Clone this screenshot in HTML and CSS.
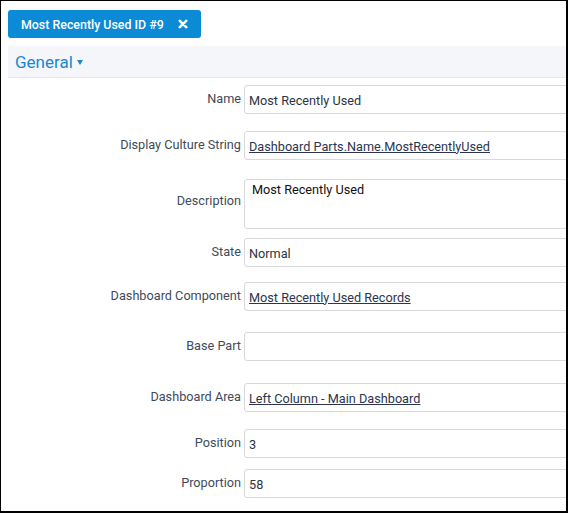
FILE: index.html
```html
<!DOCTYPE html>
<html>
<head lang="en">
    <meta charset="UTF-8">
    <title>Most Recently Used ID #9</title>
    <link rel="stylesheet" href="styles.css">
</head>
<body>
    <div class="page">
        <div class="tabs">
            <span class="tab">
                Most Recently Used ID #9
                <svg class="tab-close" width="10" height="10" viewBox="0 0 10 10">
                    <path d="M1.8 1.8 L8.2 8.2 M8.2 1.8 L1.8 8.2" stroke="#fff" stroke-width="2.6" stroke-linecap="round"/>
                </svg>
            </span>
        </div>
        <div class="section-head">
            <span class="section-title">General</span>
            <span class="caret"></span>
        </div>
        <div class="form">
            <div class="row gap17">
                <label>Name</label>
                <div class="field">Most Recently Used</div>
            </div>
            <div class="row gap19">
                <label>Display Culture String</label>
                <div class="field"><a href="#">Dashboard Parts.Name.MostRecentlyUsed</a></div>
            </div>
            <div class="row row-area gap9">
                <label>Description</label>
                <div class="field area">Most Recently Used</div>
            </div>
            <div class="row gap15">
                <label>State</label>
                <div class="field">Normal</div>
            </div>
            <div class="row gap21">
                <label>Dashboard Component</label>
                <div class="field"><a href="#">Most Recently Used Records</a></div>
            </div>
            <div class="row gap22">
                <label>Base Part</label>
                <div class="field"></div>
            </div>
            <div class="row gap17">
                <label>Dashboard Area</label>
                <div class="field"><a href="#">Left Column - Main Dashboard</a></div>
            </div>
            <div class="row gap11">
                <label>Position</label>
                <div class="field">3</div>
            </div>
            <div class="row">
                <label>Proportion</label>
                <div class="field">58</div>
            </div>
        </div>
    </div>
</body>
</html>
```

FILE: styles.css
```css
* {
    padding: 0;
    margin: 0;
    box-sizing: border-box;
}
html, body {
    width: 568px;
    height: 513px;
    overflow: hidden;
}
body {
    background: #fff;
    border-style: solid;
    border-color: #000;
    border-width: 1px 2px 2px 1px;
    font-family: Roboto, "Liberation Sans", sans-serif;
    font-size: 12.7px;
}
.page {
    padding: 9px 0 0 7px;
    width: 100%;
    overflow: hidden;
}
.tab {
    display: inline-flex;
    align-items: center;
    height: 28px;
    padding: 0 13px 0 13px;
    background: #0b8ad5;
    border-radius: 3px;
    color: #fff;
    font-size: 12.4px;
    font-weight: 500;
}
.tab-close {
    margin-left: 14px;
}
.section-head {
    margin-top: 8px;
    width: 700px;
    height: 32px;
    background: #f4f6fa;
    border-bottom: 1px solid #e4e7ec;
    padding-left: 7px;
    display: flex;
    align-items: center;
}
.section-title {
    color: #1b86d0;
    font-size: 17px;
}
.caret {
    margin-left: 4px;
    margin-top: 1px;
    width: 0;
    height: 0;
    border-left: 3px solid transparent;
    border-right: 3px solid transparent;
    border-top: 5px solid #1b86d0;
}
.form {
    padding-top: 7px;
}
.row {
    display: flex;
    align-items: center;
}
.row label {
    flex: none;
    width: 236px;
    text-align: right;
    padding-right: 3px;
    padding-bottom: 2px;
    color: #414b58;
}
.row-area label {
    padding-bottom: 8px;
}
.field {
    flex: none;
    width: 500px;
    height: 29px;
    border: 1px solid #d8d8d8;
    border-radius: 3px;
    padding: 1px 0 0 4px;
    display: flex;
    align-items: center;
    color: #2c3440;
}
.field a {
    color: #2b3550;
    text-decoration: underline;
}
.field.area {
    height: 50px;
    align-items: flex-start;
    padding: 2px 0 0 7px;
    color: #111;
}
.gap9 { margin-bottom: 9px; }
.gap11 { margin-bottom: 11px; }
.gap15 { margin-bottom: 15px; }
.gap17 { margin-bottom: 17px; }
.gap19 { margin-bottom: 19px; }
.gap21 { margin-bottom: 21px; }
.gap22 { margin-bottom: 22px; }
```
